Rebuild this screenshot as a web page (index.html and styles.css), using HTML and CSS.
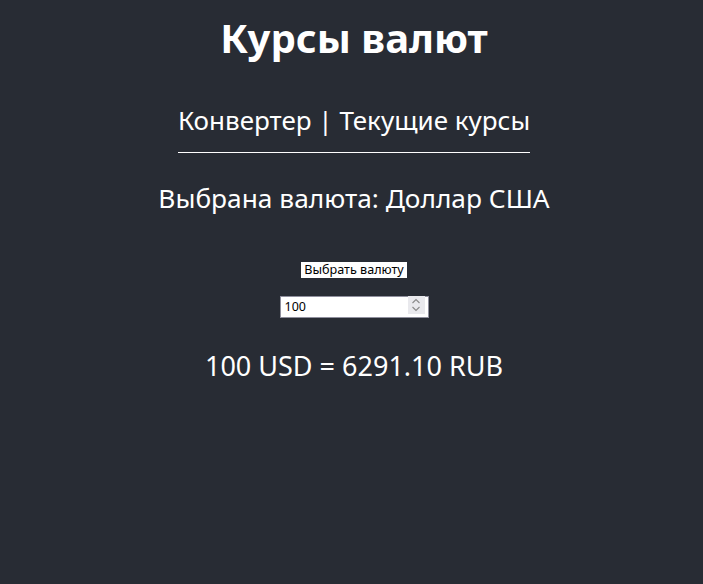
FILE: index.html
```html
<!DOCTYPE html>
<html lang="ru">
<head>
<meta charset="utf-8">
<title>Курсы валют</title>
<link rel="stylesheet" href="styles.css">
</head>
<body>
<div class="app">
  <h1 class="title">Курсы валют</h1>
  <nav class="nav"><span>Конвертер</span> | <span>Текущие курсы</span></nav>
  <h2 class="selected">Выбрана валюта: Доллар США</h2>
  <button class="pick">Выбрать валюту</button>
  <div class="amount">
    <input class="amount-input" type="text" value="100">
    <span class="spin">
      <svg width="10" height="14" viewBox="0 0 10 14"><path d="M1.5 5 L5 1.5 L8.5 5" fill="none" stroke="#8a8a8a" stroke-width="1.1"/><path d="M1.5 9 L5 12.5 L8.5 9" fill="none" stroke="#8a8a8a" stroke-width="1.1"/></svg>
    </span>
  </div>
  <p class="result">100 USD = 6291.10 RUB</p>
</div>
</body>
</html>
```
FILE: styles.css
```css
html, body {
  margin: 0;
  padding: 0;
  background: #282c34;
  height: 100%;
}
.app {
  display: flex;
  flex-direction: column;
  align-items: center;
  padding-left: 5px;
  color: #ffffff;
  font-family: "Noto Sans", "Open Sans", sans-serif;
}
.title {
  margin: 10px 0 0;
  font-size: 40px;
  font-weight: 700;
  line-height: 56px;
}
.nav {
  margin-top: 36px;
  font-size: 26px;
  line-height: 36px;
  padding-bottom: 14px;
  border-bottom: 1px solid #ffffff;
}
.selected {
  margin: 26px 0 0;
  font-size: 26.3px;
  font-weight: 400;
  line-height: 38px;
}
.pick {
  margin-top: 45px;
  font-family: "Noto Sans", sans-serif;
  font-size: 12.6px;
  line-height: 16px;
  padding: 0 3px;
  background: #ffffff;
  color: #000000;
  border: none;
  border-radius: 0;
}
.amount {
  margin-top: 16px;
  position: relative;
  width: 149px;
  height: 22px;
}
.amount-input {
  box-sizing: border-box;
  width: 100%;
  height: 100%;
  margin: 0;
  padding: 0 4px;
  border: 1px solid #8f8f9d;
  font-family: "Noto Sans", sans-serif;
  font-size: 12.5px;
  color: #000;
  background: #fff;
  outline: none;
}
.spin {
  position: absolute;
  right: 4px;
  top: 2px;
  width: 17px;
  height: 18px;
  background: #e9e9ed;
  display: flex;
  align-items: center;
  justify-content: center;
}
.result {
  margin: 31px 0 0;
  font-size: 27px;
  line-height: 38px;
}
```
